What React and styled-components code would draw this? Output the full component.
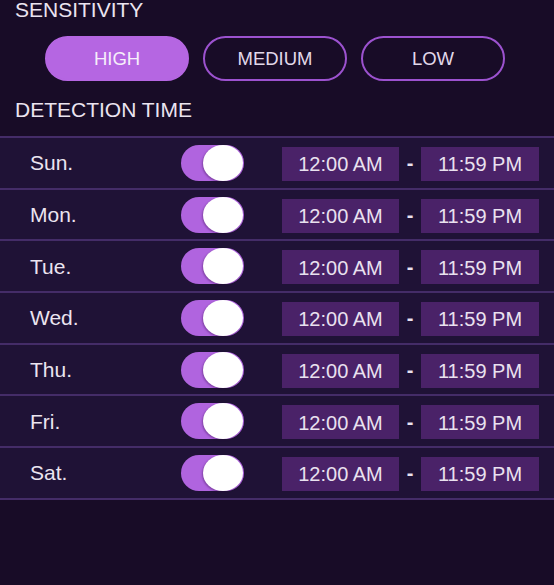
import React from "react";
import styled, { createGlobalStyle } from "styled-components";

const Global = createGlobalStyle`
  html, body { margin: 0; padding: 0; background: #180c27; }
  body { font-family: "Liberation Sans", Arial, sans-serif; -webkit-font-smoothing: antialiased; }
`;

const Screen = styled.div`
  width: 554px;
  height: 585px;
  overflow: hidden;
  background: #180c27;
  color: #ebe4f0;
  display: flex;
  flex-direction: column;
`;

const SectionTitle = styled.div`
  font-size: 21px;
  line-height: 19px;
  padding-left: 15px;
  margin-top: ${(p) => p.$top}px;
`;

const Segments = styled.div`
  display: flex;
  gap: 14px;
  padding-left: 45px;
  margin-top: 17px;
`;

const Segment = styled.button`
  width: 144px;
  height: 45px;
  border-radius: 23px;
  box-sizing: border-box;
  font-family: inherit;
  font-size: 18.5px;
  color: ${(p) => (p.$active ? "#f6eefa" : "#e2d9ea")};
  background: ${(p) => (p.$active ? "#b566e2" : "transparent")};
  border: 2px solid ${(p) => (p.$active ? "#b566e2" : "#9c52cf")};
  padding: 0;
  cursor: pointer;
`;

const List = styled.div`
  margin-top: 17px;
  border-top: 2px solid #442c68;
  background: #1f1236;
`;

const Row = styled.div`
  height: 51.7px;
  box-sizing: border-box;
  border-bottom: 2px solid #442c68;
  display: flex;
  align-items: center;
`;

const Day = styled.div`
  width: 181px;
  padding-left: 30px;
  padding-top: 1px;
  box-sizing: border-box;
  font-size: 21px;
  flex: none;
`;

const Track = styled.div`
  position: relative;
  width: 63px;
  height: 36px;
  border-radius: 18px;
  background: #b064df;
  flex: none;
`;

const Knob = styled.div`
  position: absolute;
  right: 1px;
  top: 0;
  width: 40px;
  height: 36px;
  border-radius: 50%;
  background: #ffffff;
  box-shadow: -1px 1px 2px rgba(40, 0, 60, 0.35);
`;

const TimeBox = styled.div`
  width: ${(p) => p.$w}px;
  height: 34px;
  box-sizing: border-box;
  padding-top: 2px;
  margin-left: ${(p) => p.$ml || 0}px;
  margin-top: 2px;
  background: #4a2268;
  display: flex;
  align-items: center;
  justify-content: center;
  font-size: 20px;
  color: #e9e1ef;
  flex: none;
`;

const Dash = styled.div`
  width: 22px;
  margin-top: 2px;
  text-align: center;
  font-size: 20px;
  font-weight: bold;
  color: #e9e1ef;
  flex: none;
`;

const days = ["Sun.", "Mon.", "Tue.", "Wed.", "Thu.", "Fri.", "Sat."];

export default function App() {
  return (
    <Screen>
      <Global />
      <SectionTitle $top={0}>SENSITIVITY</SectionTitle>
      <Segments>
        <Segment $active>HIGH</Segment>
        <Segment>MEDIUM</Segment>
        <Segment>LOW</Segment>
      </Segments>
      <SectionTitle $top={19}>DETECTION TIME</SectionTitle>
      <List>
        {days.map((d) => (
          <Row key={d}>
            <Day>{d}</Day>
            <Track>
              <Knob />
            </Track>
            <TimeBox $w={117} $ml={38}>12:00 AM</TimeBox>
            <Dash>-</Dash>
            <TimeBox $w={118}>11:59 PM</TimeBox>
          </Row>
        ))}
      </List>
    </Screen>
  );
}
